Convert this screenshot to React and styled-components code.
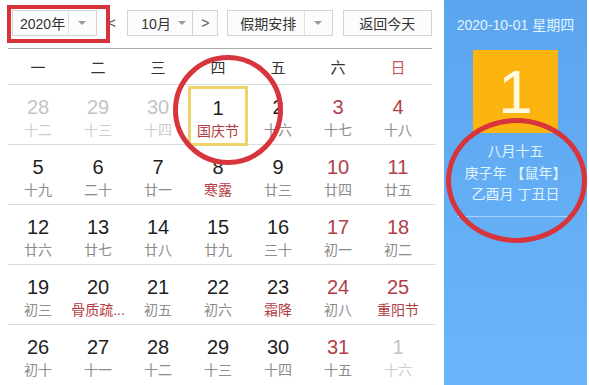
import React from "react";
import styled, { createGlobalStyle } from "styled-components";

const Global = createGlobalStyle`
  html, body { margin: 0; padding: 0; background: #fff; }
  body { font-family: "Liberation Sans", "Noto Sans CJK SC", sans-serif; }
`;

const Page = styled.div`
  position: relative;
  display: flex;
  width: 589px;
  height: 385px;
  overflow: hidden;
  background: #fff;
`;

const Left = styled.div`
  width: 424px;
  padding: 0 12px 0 8px;
  display: flex;
  flex-direction: column;
`;

const Toolbar = styled.div`
  display: flex;
  align-items: center;
  height: 28px;
  margin-top: 9px;
  padding-left: 4px;
  padding-bottom: 12px;
  border-bottom: 1px solid #a9a9a9;
`;

const Box = styled.div`
  display: flex;
  align-items: center;
  height: 26px;
  box-sizing: border-box;
  border: 1px solid #d4d4d4;
  background: #fcfcfc;
  color: #333;
  font-size: 14px;
  width: ${(p) => p.$w}px;
  margin-left: ${(p) => p.$ml || 0}px;
`;

const BoxText = styled.span`
  flex: 1;
  padding-left: ${(p) => p.$pl || 0}px;
  text-align: ${(p) => (p.$center ? "center" : "left")};
  white-space: nowrap;
`;

const ArrowSeg = styled.span`
  width: ${(p) => p.$w || 26}px;
  height: 100%;
  display: flex;
  align-items: center;
  justify-content: center;
  ${(p) => p.$divider && "border-left: 1px solid #e0e0e0;"}
  &::after {
    content: "";
    border-left: 4px solid transparent;
    border-right: 4px solid transparent;
    border-top: 4px solid #9a9a9a;
  }
`;

const NavBtn = styled.div`
  width: ${(p) => p.$w}px;
  height: 26px;
  display: flex;
  align-items: center;
  justify-content: center;
  box-sizing: border-box;
  color: #555;
  font-size: 14px;
  ${(p) => p.$bordered && "border: 1px solid #d4d4d4; border-left: none; background: #fcfcfc;"}
`;

const WeekRow = styled.div`
  display: grid;
  grid-template-columns: repeat(7, 60px);
  height: 36px;
  align-items: center;
  border-bottom: 1px solid #dcdcdc;
`;

const WeekCell = styled.div`
  text-align: center;
  font-size: 15px;
  color: ${(p) => (p.$red ? "#c8545a" : "#333")};
`;

const Row = styled.div`
  display: grid;
  grid-template-columns: repeat(7, 60px);
  height: 60px;
  box-sizing: border-box;
  border-bottom: ${(p) => (p.$last ? "none" : "1px solid #dcdcdc")};
  margin-right: -4px;
  padding-right: 4px;
`;

const Cell = styled.div`
  display: flex;
  flex-direction: column;
  align-items: center;
  padding-top: 10px;
  box-sizing: border-box;
  height: 60px;
  ${(p) => p.$today && "box-shadow: inset 0 0 0 3px #eed36a; margin-top: 1px;"}
`;

const Num = styled.div`
  font-size: 20px;
  line-height: 24px;
  color: ${(p) => (p.$muted ? "#c4c4c4" : p.$weekend ? "#b0404a" : "#1e1e1e")};
`;

const Lunar = styled.div`
  font-size: 14px;
  line-height: 18px;
  margin-top: 2px;
  white-space: nowrap;
  color: ${(p) =>
    p.$muted ? "#cdcdcd" : p.$fest ? "#b23c42" : "#8c8c8c"};
`;

const Right = styled.div`
  width: 143px;
  height: 385px;
  background: linear-gradient(#5aa5ee, #6bb5fb);
  display: flex;
  flex-direction: column;
  align-items: center;
  color: #e2f4ff;
`;

const DateLine = styled.div`
  margin-top: 16px;
  font-size: 14px;
  line-height: 18px;
  white-space: nowrap;
`;

const BigDay = styled.div`
  margin-top: 16px;
  width: 85px;
  height: 83px;
  background: #fcb50f;
  display: flex;
  align-items: center;
  justify-content: center;
  font-size: 62px;
  color: #fff9e2;
`;

const LunarInfo = styled.div`
  margin-top: 8px;
  font-size: 14px;
  line-height: 21.5px;
  text-align: center;
  white-space: nowrap;
  padding-bottom: 10px;
  width: 117px;
  border-bottom: 1px solid rgba(255, 255, 255, 0.45);
`;

const RedRect = styled.div`
  position: absolute;
  left: 7px;
  top: 5px;
  width: 103px;
  height: 38px;
  box-sizing: border-box;
  border: 4px solid #d7333b;
  pointer-events: none;
`;

const RedRing = styled.div`
  position: absolute;
  left: ${(p) => p.$x}px;
  top: ${(p) => p.$y}px;
  width: ${(p) => p.$w}px;
  height: ${(p) => p.$h}px;
  box-sizing: border-box;
  border: 5px solid #d7343c;
  border-radius: 50%;
  pointer-events: none;
`;

const weeks = ["一", "二", "三", "四", "五", "六", "日"];

const rows = [
  [
    ["28", "十二", "m"],
    ["29", "十三", "m"],
    ["30", "十四", "m"],
    ["1", "国庆节", "today"],
    ["2", "十六"],
    ["3", "十七"],
    ["4", "十八"],
  ],
  [
    ["5", "十九"],
    ["6", "二十"],
    ["7", "廿一"],
    ["8", "寒露", "f"],
    ["9", "廿三"],
    ["10", "廿四"],
    ["11", "廿五"],
  ],
  [
    ["12", "廿六"],
    ["13", "廿七"],
    ["14", "廿八"],
    ["15", "廿九"],
    ["16", "三十"],
    ["17", "初一"],
    ["18", "初二"],
  ],
  [
    ["19", "初三"],
    ["20", "骨质疏...", "f"],
    ["21", "初五"],
    ["22", "初六"],
    ["23", "霜降", "f"],
    ["24", "初八"],
    ["25", "重阳节", "f"],
  ],
  [
    ["26", "初十"],
    ["27", "十一"],
    ["28", "十二"],
    ["29", "十三"],
    ["30", "十四"],
    ["31", "十五"],
    ["1", "十六", "m"],
  ],
];

export default function App() {
  return (
    <>
      <Global />
      <Page>
        <Left>
          <Toolbar>
            <Box $w={85}>
              <BoxText $pl={7}>2020年</BoxText>
              <ArrowSeg $divider $w={27} />
            </Box>
            <NavBtn $w={31}>&lt;</NavBtn>
            <Box $w={66}>
              <BoxText $pl={13}>10月</BoxText>
              <ArrowSeg $w={24} />
            </Box>
            <NavBtn $w={25} $bordered>&gt;</NavBtn>
            <Box $w={106} $ml={9}>
              <BoxText $pl={12}>假期安排</BoxText>
              <ArrowSeg $divider $w={27} />
            </Box>
            <Box $w={90} $ml={10}>
              <BoxText $center>返回今天</BoxText>
            </Box>
          </Toolbar>
          <WeekRow>
            {weeks.map((w, i) => (
              <WeekCell key={w} $red={i === 6}>
                {w}
              </WeekCell>
            ))}
          </WeekRow>
          {rows.map((r, ri) => (
            <Row key={ri} $last={ri === rows.length - 1}>
              {r.map(([n, l, k], ci) => (
                <Cell key={ci} $today={k === "today"}>
                  <Num $muted={k === "m"} $weekend={ci >= 5}>
                    {n}
                  </Num>
                  <Lunar $muted={k === "m"} $fest={k === "f" || k === "today"}>
                    {l}
                  </Lunar>
                </Cell>
              ))}
            </Row>
          ))}
        </Left>
        <Right>
          <DateLine>2020-10-01 星期四</DateLine>
          <BigDay>1</BigDay>
          <LunarInfo>
            八月十五
            <br />
            庚子年 【鼠年】
            <br />
            乙酉月 丁丑日
          </LunarInfo>
        </Right>
        <RedRect />
        <RedRing $x={173} $y={55} $w={110} $h={110} />
        <RedRing $x={446} $y={118} $w={141} $h={125} />
      </Page>
    </>
  );
}
